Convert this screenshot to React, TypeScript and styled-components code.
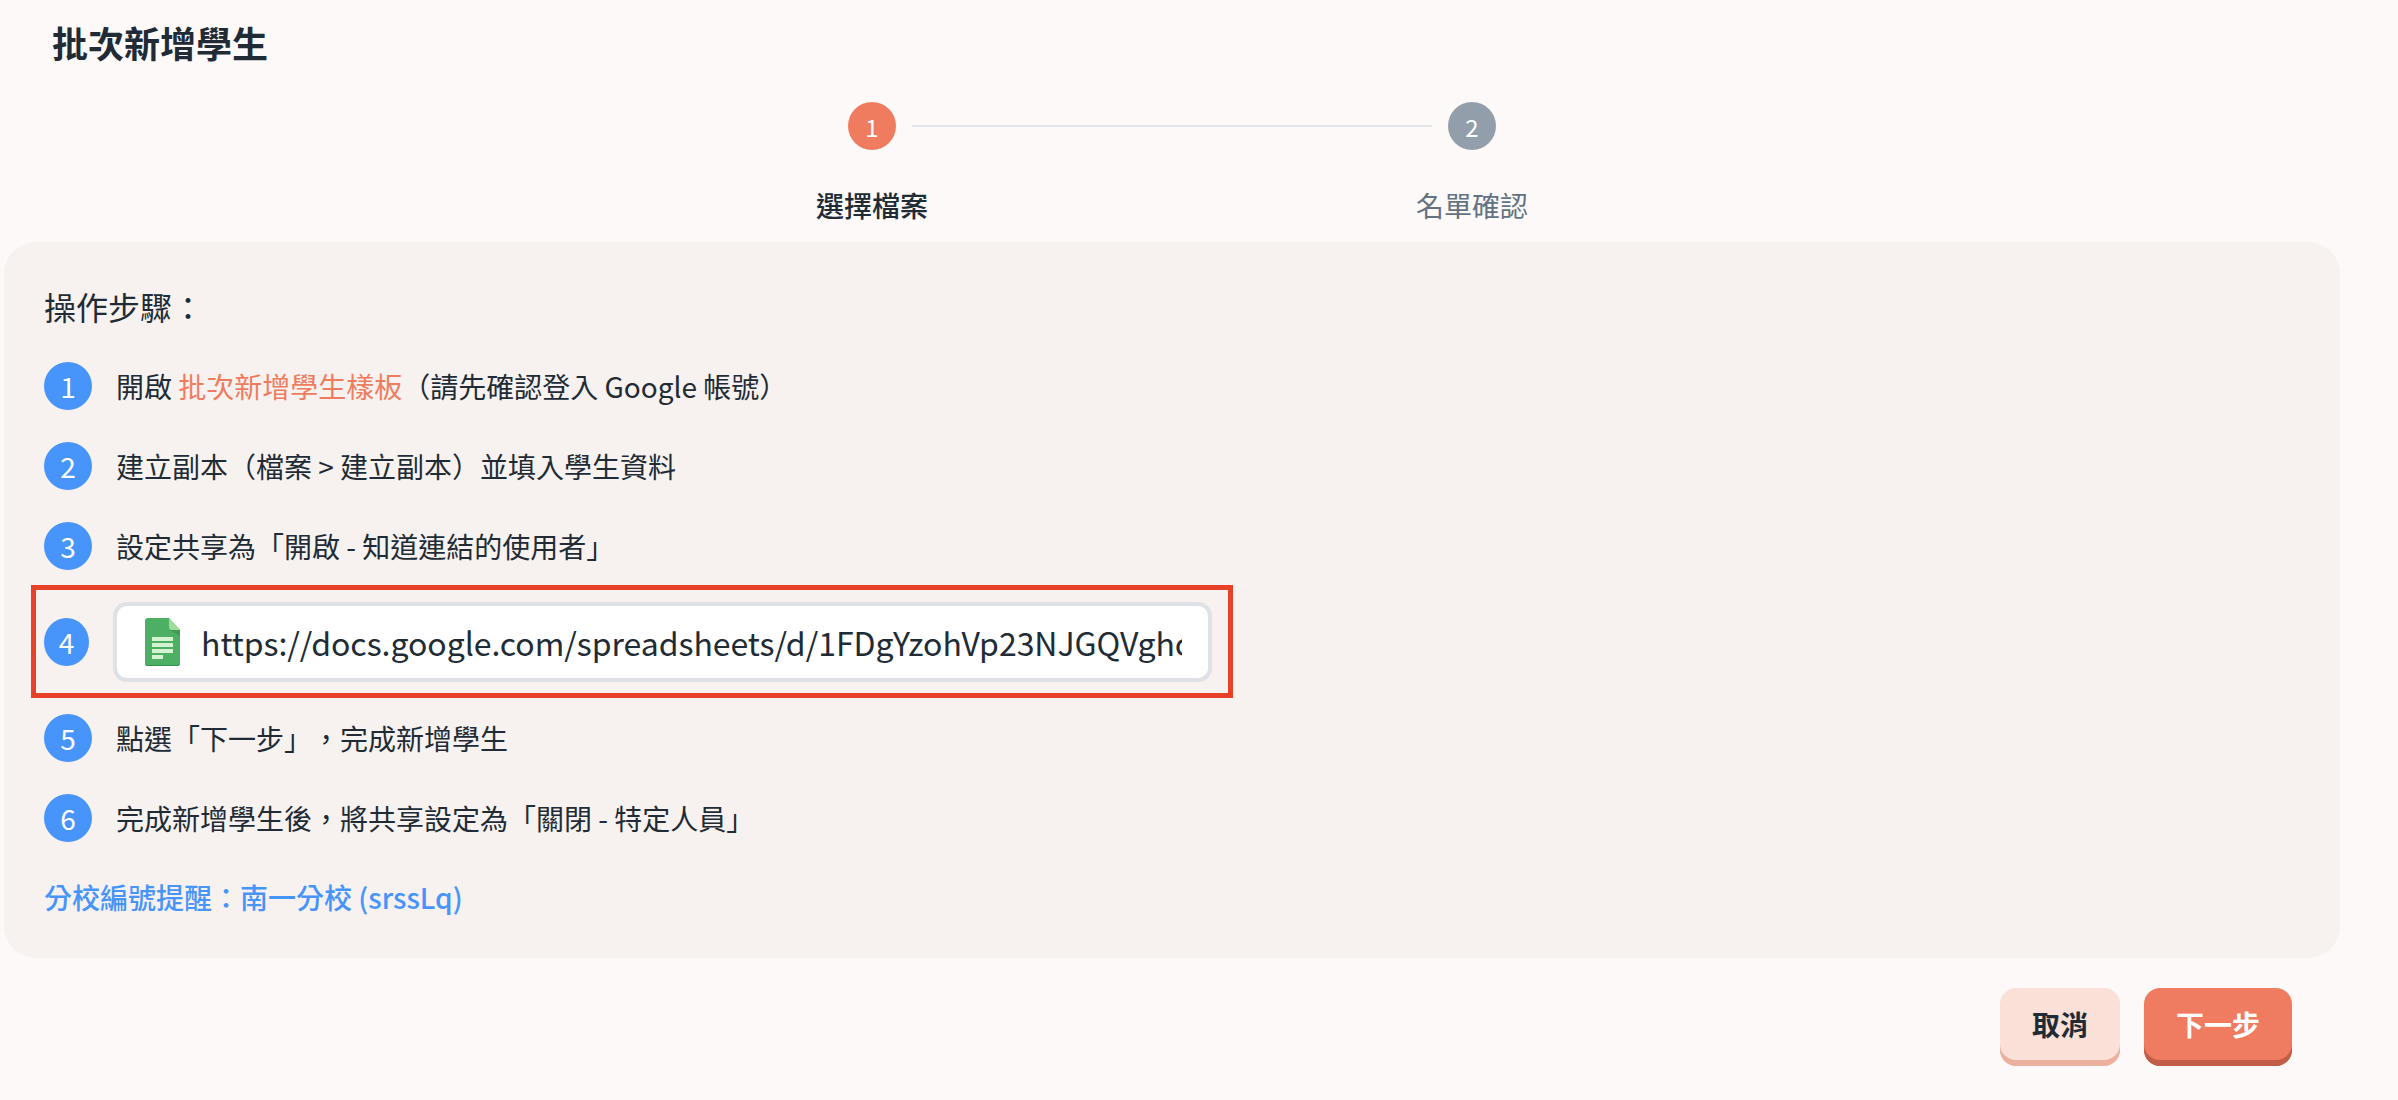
import styled, { createGlobalStyle } from "styled-components";

const GlobalStyle = createGlobalStyle`
  html, body {
    margin: 0;
    padding: 0;
    background: #fcf9f8;
    font-family: "Noto Sans CJK TC", "Noto Sans", sans-serif;
    color: #212b36;
    text-spacing-trim: space-all;
  }
  * {
    box-sizing: border-box;
  }
`;

const Page = styled.div`
  width: 2336px;
  height: 1100px;
  margin-left: 4px;
  display: flex;
  flex-direction: column;
  overflow: hidden;
`;

const Title = styled.h1`
  margin: 15px 0 0 48px;
  font-size: 36px;
  line-height: 54px;
  font-weight: 700;
`;

const Stepper = styled.div`
  margin-top: 33px;
  align-self: center;
  display: grid;
  grid-template-columns: 48px 520px 48px;
  column-gap: 16px;
  row-gap: 34px;
  align-items: center;
  justify-items: center;
`;

const StepDot = styled.div<{ $active?: boolean }>`
  width: 48px;
  height: 48px;
  border-radius: 50%;
  background: ${(p) => (p.$active ? "#f07c60" : "#939eab")};
  color: #ffffff;
  font-size: 24px;
  display: flex;
  align-items: center;
  justify-content: center;
`;

const StepLine = styled.div`
  width: 100%;
  height: 2px;
  background: #e3e5e9;
`;

const StepLabel = styled.div<{ $active?: boolean; $col: number }>`
  grid-column: ${(p) => p.$col};
  white-space: nowrap;
  font-size: 28px;
  line-height: 42px;
  font-weight: ${(p) => (p.$active ? 500 : 400)};
  color: ${(p) => (p.$active ? "#212b36" : "#637381")};
`;

const Panel = styled.section`
  margin-top: 16px;
  height: 716px;
  border-radius: 32px;
  background: #f7f2ef;
  padding: 40px 40px 40px 40px;
  display: flex;
  flex-direction: column;
`;

const Heading = styled.div`
  font-size: 32px;
  line-height: 48px;
  margin-bottom: 32px;
`;

const Steps = styled.ol`
  margin: 0;
  padding: 0;
  list-style: none;
  display: flex;
  flex-direction: column;
  gap: 32px;
`;

const Step = styled.li<{ $wide?: boolean }>`
  position: relative;
  display: flex;
  align-items: center;
  gap: 24px;
  min-height: 48px;
  font-size: 28px;
  line-height: 42px;
  width: ${(p) => (p.$wide ? "1168px" : "auto")};
`;

const Num = styled.span`
  width: 48px;
  height: 48px;
  flex-shrink: 1;
  border-radius: 50%;
  background: #4794fb;
  color: #ffffff;
  font-size: 28px;
  display: flex;
  align-items: center;
  justify-content: center;
`;

const TemplateLink = styled.a`
  color: #f07c60;
  text-decoration: none;
`;

const UrlBox = styled.div`
  flex: 0 0 1099px;
  height: 80px;
  border: 4px solid #dfe1e6;
  border-radius: 14px;
  background: #ffffff;
  padding: 0 26px 0 28px;
  display: flex;
  align-items: center;
  gap: 21px;
`;

const UrlInput = styled.input`
  flex: 1;
  min-width: 0;
  border: none;
  outline: none;
  padding: 0;
  background: transparent;
  font-family: inherit;
  font-size: 32px;
  letter-spacing: -0.04px;
  color: #212b36;
`;

const Highlight = styled.div`
  position: absolute;
  left: -13px;
  top: -17px;
  width: 1202px;
  height: 113px;
  border: 5px solid #e8412a;
  pointer-events: none;
`;

const Note = styled.div`
  margin-top: 34px;
  font-size: 28px;
  line-height: 42px;
  font-weight: 500;
  color: #4794fb;
`;

const Actions = styled.div`
  margin-top: 30px;
  padding-right: 48px;
  display: flex;
  justify-content: flex-end;
  gap: 24px;
`;

const Button = styled.button<{ $primary?: boolean }>`
  height: 78px;
  padding: 0 32px 6px;
  border: none;
  border-radius: 16px;
  font-family: inherit;
  font-size: 28px;
  font-weight: 700;
  cursor: pointer;
  background: ${(p) => (p.$primary ? "#ef7c61" : "#fbe0d7")};
  color: ${(p) => (p.$primary ? "#ffffff" : "#212b36")};
  box-shadow: inset 0 -6px 0 ${(p) => (p.$primary ? "#c25d48" : "#ebb09e")};
`;

const SheetsIcon = () => (
  <svg width="35" height="48" viewBox="0 0 35 48" style={{ flexShrink: 0 }}>
    <path d="M3 0H24L35 12V45a3 3 0 0 1-3 3H3a3 3 0 0 1-3-3V3a3 3 0 0 1 3-3Z" fill="#4caf64" />
    <path d="M0 45a3 3 0 0 0 3 3H32a3 3 0 0 0 3-3v-1a3 3 0 0 1-3 3H3a3 3 0 0 1-3-3Z" fill="#338f4e" />
    <path d="M25 12 35 18V12Z" fill="#3f9a58" />
    <path d="M24 0 35 12H27a3 3 0 0 1-3-3Z" fill="#9fdc9c" />
    <path d="M7 19H28V23H7ZM7 25H28V29H7ZM7 31H28V35H7ZM7 37H18V41H7Z" fill="#d4f3d2" />
  </svg>
);

const App = () => {
  return (
    <>
      <GlobalStyle />
      <Page>
        <Title>批次新增學生</Title>

        <Stepper>
          <StepDot $active>1</StepDot>
          <StepLine />
          <StepDot>2</StepDot>
          <StepLabel $active $col={1}>選擇檔案</StepLabel>
          <StepLabel $col={3}>名單確認</StepLabel>
        </Stepper>

        <Panel>
          <Heading>操作步驟：</Heading>
          <Steps>
            <Step>
              <Num>1</Num>
              <span>
                開啟 <TemplateLink href="#">批次新增學生樣板</TemplateLink>（請先確認登入 Google 帳號）
              </span>
            </Step>
            <Step>
              <Num>2</Num>
              <span>建立副本（檔案 &gt; 建立副本）並填入學生資料</span>
            </Step>
            <Step>
              <Num>3</Num>
              <span>設定共享為「開啟 - 知道連結的使用者」</span>
            </Step>
            <Step $wide>
              <Num>4</Num>
              <UrlBox>
                <SheetsIcon />
                <UrlInput
                  readOnly
                  value="https://docs.google.com/spreadsheets/d/1FDgYzohVp23NJGQVghcK2xT7mLq9RbW4sUe/edit"
                />
              </UrlBox>
              <Highlight />
            </Step>
            <Step>
              <Num>5</Num>
              <span>點選「下一步」，完成新增學生</span>
            </Step>
            <Step>
              <Num>6</Num>
              <span>完成新增學生後，將共享設定為「關閉 - 特定人員」</span>
            </Step>
          </Steps>
          <Note>分校編號提醒：南一分校 (srssLq)</Note>
        </Panel>

        <Actions>
          <Button>取消</Button>
          <Button $primary>下一步</Button>
        </Actions>
      </Page>
    </>
  );
};

export default App;
